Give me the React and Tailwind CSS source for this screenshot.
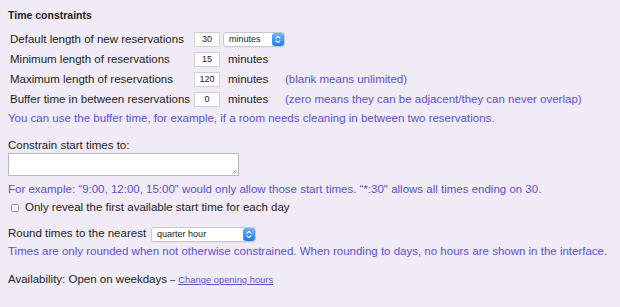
import React from 'react';

const Stepper = () => (
  <span className="ml-auto flex h-[13px] w-[12px] items-center justify-center rounded-[3px] bg-gradient-to-b from-[#6cb3fa] to-[#1a7cf0]">
    <svg width="6" height="9" viewBox="0 0 6 9" fill="none" stroke="white" strokeWidth="1.1" strokeLinecap="round" strokeLinejoin="round">
      <path d="M1 3.2 L3 1.3 L5 3.2" />
      <path d="M1 5.8 L3 7.7 L5 5.8" />
    </svg>
  </span>
);

const FakeSelect = ({ value, className }) => (
  <div className={'flex h-[15px] items-center rounded-[3px] border border-[#c9c6cc] bg-white pl-[5px] text-[9px] leading-none text-[#222] shadow-[0_1px_0_rgba(0,0,0,0.04)] ' + className}>
    <span>{value}</span>
    <Stepper />
  </div>
);

const NumBox = ({ value }) => (
  <div className="flex h-[15px] w-[26px] shrink-0 items-center justify-center border border-[#d2d0d6] bg-white text-[9px] leading-none text-[#222]">
    {value}
  </div>
);

const Row = ({ label, value, children, hint }) => (
  <div className="flex h-[20px] items-center">
    <span className="w-[186px] shrink-0 whitespace-nowrap pl-[2px]">{label}</span>
    <NumBox value={value} />
    <div className="ml-[3px] w-[62px] shrink-0">{children}</div>
    {hint && <span className="whitespace-nowrap text-[#5c52cc]">{hint}</span>}
  </div>
);

export default function App() {
  return (
    <div className="h-[307px] w-[620px] overflow-hidden bg-[#f0ebf6] px-[8px] pt-[10px] text-[11.5px] leading-none text-[#1e1e1e]" style={{ fontFamily: '"Liberation Sans", Arial, sans-serif' }}>
      <div className="text-[10.5px] font-bold">Time constraints</div>

      <div className="mt-[9px]">
        <Row label="Default length of new reservations" value="30">
          <FakeSelect value="minutes" className="w-[62px]" />
        </Row>
        <Row label="Minimum length of reservations" value="15">
          <span className="pl-[5px]">minutes</span>
        </Row>
        <Row label="Maximum length of reservations" value="120" hint="(blank means unlimited)">
          <span className="pl-[5px]">minutes</span>
        </Row>
        <Row label="Buffer time in between reservations" value="0" hint="(zero means they can be adjacent/they can never overlap)">
          <span className="pl-[5px]">minutes</span>
        </Row>
      </div>

      <p className="mt-[3px] text-[#5c52cc]">
        You can use the buffer time, for example, if a room needs cleaning in between two reservations.
      </p>

      <p className="mt-[16px]">Constrain start times to:</p>
      <div className="relative mt-[1px] h-[23px] w-[231px] border border-[#b9b6bd] bg-white">
        <svg className="absolute bottom-[1px] right-[1px]" width="5" height="5" viewBox="0 0 5 5" stroke="#9a979e" strokeWidth="0.8">
          <path d="M0.5 4.5 L4.5 0.5 M2.5 4.5 L4.5 2.5" />
        </svg>
      </div>

      <p className="mt-[8px] text-[#5c52cc]">
        For example: “9:00, 12:00, 15:00” would only allow those start times. “*:30" allows all times ending on 30.
      </p>

      <label className="mt-[7px] flex items-center">
        <span className="ml-[3px] mr-[6px] inline-block h-[8px] w-[8px] rounded-[2px] border border-[#9d9aa1] bg-white" />
        <span>Only reveal the first available start time for each day</span>
      </label>

      <div className="mt-[13px] flex items-center">
        <span>Round times to the nearest</span>
        <FakeSelect value="quarter hour" className="ml-[5px] w-[105px]" />
      </div>
      <p className="mt-[4px] text-[#5c52cc]">
        Times are only rounded when not otherwise constrained. When rounding to days, no hours are shown in the interface.
      </p>

      <div className="mt-[17px] flex items-baseline">
        <span>Availability: Open on weekdays</span>
        <span className="ml-[3px] text-[9.5px]">–</span>
        <a href="#" className="ml-[3px] text-[9.4px] text-[#5c52cc] underline">Change opening hours</a>
      </div>
    </div>
  );
}
